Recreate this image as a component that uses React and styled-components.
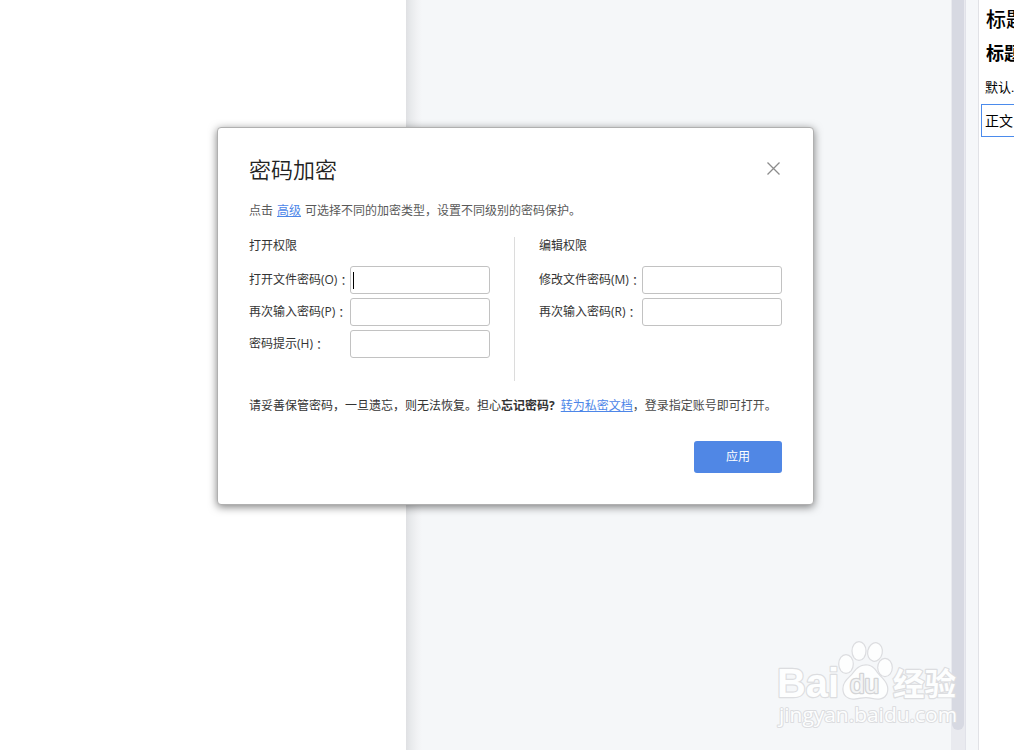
import React from 'react'
import styled, { createGlobalStyle } from 'styled-components'

const GlobalStyle = createGlobalStyle`
  * { box-sizing: border-box; }
  body {
    margin: 0;
    overflow: hidden;
    background: #fff;
    font-family: "Open Sans", "Noto Sans CJK SC", sans-serif;
    font-size: 12px;
  }
`
const Window = styled.div`
  position: relative;
  display: flex;
  width: 1014px;
  height: 750px;
  overflow: hidden;
`
const Page = styled.div`
  width: 406px;
  background: #fff;
`
const Canvas = styled.div`
  width: 545px;
  background: linear-gradient(to right, #dfe0e3 0, #e8eaec 5px, #f1f2f4 11px, #f5f7f9 16px);
`
const ScrollTrack = styled.div`
  width: 15px;
  padding-left: 1px;
  background: #e9eaef;
  border-right: 1px solid #e1e2e9;
`
const ScrollThumb = styled.div`
  width: 12px;
  height: 730px;
  border-radius: 0 0 6px 6px;
  background: #d7d9e2;
`
const Gutter = styled.div`
  width: 13px;
  background: #f5f7f9;
  border-right: 1px solid #e1e2e6;
`
const StylePanel = styled.div`
  width: 35px;
  padding: 5px 0 0 2px;
  overflow: hidden;
  color: #000;
  white-space: nowrap;
`
const StyleItem = styled.div`
  height: ${p => p.height}px;
  line-height: ${p => p.height}px;
  padding-left: ${p => p.indent || 5}px;
  font-size: ${p => p.size}px;
  font-weight: ${p => p.weight || 400};
  font-family: "Liberation Serif", "Noto Sans CJK SC", serif;
`
const ActiveItem = styled(StyleItem)`
  width: 60px;
  height: 33px;
  padding-left: 3px;
  border: 1px solid #4b8bec;
`
const Dialog = styled.div`
  position: absolute;
  left: 217px;
  top: 127px;
  width: 597px;
  height: 378px;
  padding: 26px 31px 0;
  border: 1px solid #b0b0b0;
  border-radius: 4px;
  background: #fff;
  box-shadow: 0 2px 8px rgba(0, 0, 0, 0.5);
  color: #333;
`
const Header = styled.div`
  display: flex;
  justify-content: space-between;
  height: 32px;
`
const Title = styled.div`
  font-size: 22px;
  line-height: 30px;
  font-weight: 350;
  color: #222;
`
const Close = styled.button`
  display: block;
  width: 16px;
  height: 16px;
  margin: 7px 0 0;
  padding: 0;
  border: none;
  background: none;
`
const Line = styled.div`
  height: 18px;
  line-height: 18px;
  white-space: nowrap;
  color: ${p => p.color || '#333'};
`
const Hint = styled(Line)`
  margin-top: 16px;
`
const Link = styled.a`
  color: #4d86e8;
  text-decoration: underline;
  text-underline-offset: 1px;
  margin: ${p => p.gap};
`
const Columns = styled.div`
  display: flex;
  height: 144px;
  margin-top: 17px;
`
const Group = styled.div`
  width: ${p => p.width}px;
  margin-right: ${p => p.gap || 0}px;
`
const Divider = styled.div`
  width: 1px;
  margin-right: 24px;
  background: #dcdcdc;
`
const GroupTitle = styled(Line)`
  margin-bottom: 11px;
`
const Field = styled.label`
  display: flex;
  align-items: center;
  justify-content: space-between;
  height: 28px;
  margin-bottom: 4px;
  white-space: nowrap;
`
const Label = styled.span`
  display: flex;
  height: 18px;
  line-height: 18px;
`
const Colon = styled.span`
  padding-top: 1px;
  font-family: "Noto Sans CJK JP", sans-serif;
`
const Box = styled.div`
  display: flex;
  align-items: center;
  flex: none;
  width: 140px;
  height: 28px;
  padding-left: 2px;
  border: 1px solid #c2c2c2;
  border-radius: 3px;
  background: #fff;
`
const Caret = styled.div`
  width: 1px;
  height: 17px;
  background: #000;
`
const Notice = styled(Line)`
  margin-top: 16px;
`
const Muted = styled.span`
  color: #4a4a4a;
`
const Apply = styled.button`
  display: block;
  width: 88px;
  height: 32px;
  margin: 26px 0 0 auto;
  padding: 0 0 2px;
  border: none;
  border-radius: 3px;
  background: #5087e5;
  color: #fff;
  font: inherit;
`
const Watermark = styled.svg`
  position: absolute;
  left: 764px;
  top: 630px;
`

function PasswordField({ label, focused }) {
  return (
    <Field>
      <Label>{label}<Colon>：</Colon></Label>
      <Box>{focused && <Caret />}</Box>
    </Field>
  )
}

function BaiduMark() {
  return (
    <Watermark width="250" height="120" viewBox="0 0 250 120">
      <g fill="#fdfefe" stroke="#dcdde0" strokeWidth="2.4" paintOrder="stroke" strokeLinejoin="round">
        <text x="13" y="67" fontFamily="Liberation Sans" fontWeight="700" fontSize="41" textLength="62" lengthAdjust="spacingAndGlyphs">Bai</text>
        <ellipse cx="82" cy="34" rx="6.7" ry="8.8" />
        <ellipse cx="95" cy="21" rx="6.4" ry="8.8" />
        <ellipse cx="111" cy="22" rx="6.7" ry="8.8" transform="rotate(12 111 22)" />
        <ellipse cx="121" cy="37.500" rx="6.7" ry="8.600" />
        <path d="M102 35.500C95 35.500 92 40 88 45C83 50 79.500 53 79.500 59C79.500 65 84 69 90 68.500C95 68 98 67 102 67C107 67 110 69 115 68.500C121 68 124 63 123 57C122 51 117 48 113 43C110 38 107 35.500 102 35.500Z" />
        <text x="86" y="63" fontFamily="Liberation Sans" fontSize="25" textLength="29" lengthAdjust="spacingAndGlyphs" fill="#f3f4f5" stroke="#d3d4d6" strokeWidth="2.6">du</text>
        <text x="129" y="65" fontFamily="Noto Sans CJK SC" fontWeight="700" fontSize="31" textLength="63" lengthAdjust="spacingAndGlyphs">经验</text>
        <text x="15" y="91.500" fontFamily="Open Sans" fontSize="20" strokeWidth="2" textLength="178" lengthAdjust="spacingAndGlyphs">jingyan.baidu.com</text>
      </g>
    </Watermark>
  )
}

export default function App() {
  return (
    <Window>
      <GlobalStyle />
      <Page />
      <Canvas />
      <ScrollTrack><ScrollThumb /></ScrollTrack>
      <Gutter />
      <StylePanel>
        <StyleItem height={31} size={20} weight={500}>标题 1</StyleItem>
        <StyleItem height={36} size={18} weight={700}>标题 2</StyleItem>
        <StyleItem height={32} size={13} indent={4}>默认...</StyleItem>
        <ActiveItem height={33} size={14}>正文</ActiveItem>
      </StylePanel>
      <Dialog>
        <Header>
          <Title>密码加密</Title>
          <Close>
            <svg width="16" height="16" viewBox="0 0 16 16" stroke="#8c8c8c" strokeWidth="1.3">
              <path d="M1.500 1.500L13.500 13.500M13.500 1.500L1.500 13.500" />
            </svg>
          </Close>
        </Header>
        <Hint color="#595959">
          点击<Link gap="0 4px">高级</Link>可选择不同的加密类型，设置不同级别的密码保护。
        </Hint>
        <Columns>
          <Group width={241} gap={24}>
            <GroupTitle>打开权限</GroupTitle>
            <PasswordField label="打开文件密码(O)" focused />
            <PasswordField label="再次输入密码(P)" />
            <PasswordField label="密码提示(H)" />
          </Group>
          <Divider />
          <Group width={243}>
            <GroupTitle>编辑权限</GroupTitle>
            <PasswordField label="修改文件密码(M)" />
            <PasswordField label="再次输入密码(R)" />
          </Group>
        </Columns>
        <Notice>
          请妥善保管密码，一旦遗忘，则无法恢复。担心<b>忘记密码?</b><Link gap="0 0 0 6px">转为私密文档</Link><Muted>，登录指定账号即可打开。</Muted>
        </Notice>
        <Apply>应用</Apply>
      </Dialog>
      <BaiduMark />
    </Window>
  )
}
